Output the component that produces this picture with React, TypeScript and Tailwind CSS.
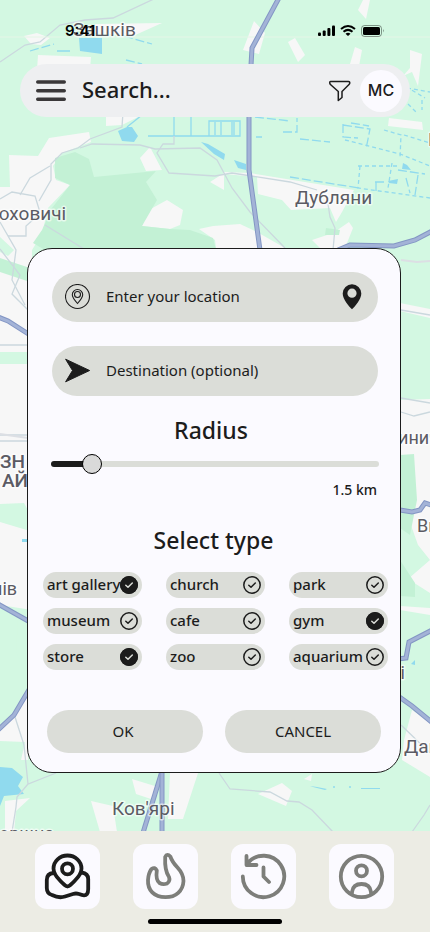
import React, { useState } from "react";

const placeTypes = [
  { name: "art gallery", selected: true },
  { name: "church", selected: false },
  { name: "park", selected: false },
  { name: "museum", selected: false },
  { name: "cafe", selected: false },
  { name: "gym", selected: true },
  { name: "store", selected: true },
  { name: "zoo", selected: false },
  { name: "aquarium", selected: false },
];

const highways = [
  "M280 -4 252 48 249 100V170L260 250",
  "M338 250 350 245 394 246 415 240 434 230",
  "M-2 317 8 321 30 335",
  "M-2 604 30 622",
  "M30 688 14 715 -2 730",
  "M400 510 412 512 420 510 425 503 434 506",
  "M398 659 406 658 409 642 434 629",
  "M398 696 412 706 434 724",
  "M163 768 142 836",
  "M162 768V836",
];

const labels = [
  { text: "Зашків", x: 73, y: 36 },
  { text: "Дубляни", x: 295, y: 204 },
  { text: "юховичі", x: -6, y: 220 },
  { text: "Ков'ярі", x: 112, y: 815 },
  { text: "Дави", x: 404, y: 753 },
];

const smallLabels = [
  { text: "инич", x: 398, y: 444 },
  { text: "Вин", x: 417, y: 532 },
  { text: "ні", x: 390, y: 679 },
  { text: "нів", x: -8, y: 595 },
  { text: "оршна", x: -1, y: 840 },
  { text: "К", x: 428, y: 146 },
];

function MapBackground() {
  return (
    <svg
      className="absolute inset-0 h-full w-full"
      viewBox="0 0 430 932"
      preserveAspectRatio="xMidYMin slice"
      aria-hidden="true"
    >
      <rect width="430" height="932" fill="#d3f8e2" />
      <g fill="#f7f7f7">
        <path d="M95 24 162 23 133 36 95 33ZM24 36 37 33 50 38 41 45 31 44ZM38 55 91 57 90 70H37Z" />
        <path d="M254 21 265 33 259 54 243 50ZM288 42 295 38 305 55 298 62ZM363 0H370L366 19 358 10ZM355 47 362 50 359 66 350 64ZM410 50 422 54 418 86 412 72 403 76 410 68Z" />
        <path d="M106 115H142L122 125 106 126ZM389 118 422 122 423 130 388 126Z" />
        <path d="M0 187 10 187 9 155 38 156 49 138 89 132 91 142 62 153 53 166 56 180 70 185 48 208 42 234 32 250V610L0 605Z" />
        <path d="M150 147 162 170 146 171 140 158ZM167 200 183 210 180 225 170 229 142 226 147 211ZM210 182 224 173V190Z" />
        <path d="M224 172 250 173 354 190 342 212 336 222 330 208 291 210 282 200 258 194 257 177 225 174ZM199 229 213 226 240 224 257 232 285 248H216L215 240ZM349 222 353 228 345 248H320L312 240 333 233Z" />
        <path d="M400 303 430 309V318L400 311ZM400 400 430 399V560L418 545 402 500ZM400 606 430 608V615L400 610ZM408 579 430 560V593ZM412 710 430 722V777L402 760 404 740Z" />
        <path d="M0 728 28 695V760H21L25 742 0 741ZM5 801 30 798 16 811 14 832H5ZM91 801 113 806 117 832H100ZM132 779 158 787 151 799 136 794ZM170 773H198L183 819H168ZM282 783 292 791 286 806 258 794ZM304 779 312 774 311 781Z" />
      </g>
      <g fill="#c3f1d5">
        <path d="M55 158 75 152 89 159 94 177 156 171 146 182 157 200 142 226 170 229 190 230 213 238 216 250H45L33 243 42 230 52 208 70 185 55 178Z" />
        <path d="M326 228 340 230 339 235 325 235ZM0 258 30 268V282L0 272ZM400 455 414 454 417 500 410 535 400 528ZM400 560 415 583V597L400 596Z" />
      </g>
      <path
        fill="#d3f8e2"
        d="M0 352H30V364H0ZM0 504 24 503 30 514V531L0 522ZM400 531 410 540 402 555ZM18 620 30 626V690L16 650ZM0 237 14 250 8 256 0 252Z"
      />
      <path
        fill="#90daee"
        d="M79 38 102 38 102 54 80 51ZM118 131 127 127 132 127 138 136 134 142 122 141ZM201 142 208 144 225 154 224 160 214 154ZM234 160 246 164 246 170 238 168ZM0 767 12 768 23 777 18 786 24 794 4 796 0 806ZM22 539H27V542H22ZM310 786 317 787 327 789 325 790 313 787ZM361 788H380V789H361ZM388 181 398 179 397 184 389 183ZM403 163 407 165 411 170 402 169ZM411 664 415 660V665Z"
      />
      <g fill="none" stroke="#90daee" strokeWidth="1.300">
        <path d="M127 127 142 115M148 136H240V121H209V136M174 115V136M191 115V136M215 122V135M221 122V135M232 122V135M234 122V135M57 51H70" />
        <path
          d="M30 51 54 44M124 36 152 44M126 60 142 64M256 137H262M283 132H297V118M255 117 290 121M300 139 330 142M343 124V137L358 138M343 125 370 129 366 149M351 123 369 126M290 177 359 188M375 182H386M376 191V180M398 170 425 174M406 178 410 193M418 175 415 195"
          strokeDasharray="9 3"
        />
        <path
          d="M345 140 400 154 430 166M358 166H400M360 166 358 188 430 198M384 130 401 135 400 158M404 135 430 143M392 163 388 188M408 104 416 112M400 83 425 98M407 88 430 92M422 100V110"
          strokeDasharray="4 3"
        />
        <path d="M333 787H335M349 787H351" />
      </g>
      <g fill="none" stroke="#cbd8de" strokeWidth="1.300">
        <path d="M0 62 25 45 40 42 60 25 85 20 113 18 156 -2" />
        <path d="M0 199 12 192 35 196 39 209 36 217 26 226 26 236H8M39 201 51 180 51 164 62 153 78 148 90 139 122 127 123 112M20 195 30 178 50 166M80 148 92 144 140 145 155 149 200 148 217 160 232 188 250 212 285 248" />
        <path d="M174 136V144H163L157 153 169 173 215 176 232 173 290 182 317 190M328 204 330 217 335 228 333 250M45 225 84 249M0 222 16 250 12 280 25 305" />
        <path d="M0 249 20 275 12 294 28 310M0 345H30M0 435H28M0 441H28M401 310 430 315M401 398 430 403M401 412 414 416 430 412" />
        <path d="M15 717 24 745 28 784 56 773M28 784 17 797 16 807 12 832M219 773 230 789 270 792 287 801 299 802 312 810 333 832M412 832 424 815 430 805M401 725 430 753" />
      </g>
      <path d="M0 434 28 438M401 260 417 262 430 261" fill="none" stroke="#dcdfe4" strokeWidth="2" />
      <path d="M0 37H430" stroke="#e5f6e7" strokeWidth="1" />
      {highways.map((d) => (
        <g key={d} fill="none">
          <path d={d} stroke="#8396c4" strokeWidth="5" />
          <path d={d} stroke="#a3b3d7" strokeWidth="3" />
        </g>
      ))}
      <g
        className="font-['Roboto','Noto_Sans',sans-serif]"
        fill="#5b5b64"
        stroke="#ffffff"
        strokeWidth="3"
        strokeOpacity="0.6"
        strokeLinejoin="round"
        paintOrder="stroke"
      >
        {labels.map((l) => (
          <text key={l.text} x={l.x} y={l.y} fontSize="19">
            {l.text}
          </text>
        ))}
        {smallLabels.map((l) => (
          <text key={l.text} x={l.x} y={l.y} fontSize="18">
            {l.text}
          </text>
        ))}
        <text x="25" y="468" fontSize="19" fontWeight="500" textAnchor="end">
          ЗН
        </text>
        <text x="28" y="487" fontSize="19" fontWeight="500" textAnchor="end">
          АЙ
        </text>
      </g>
    </svg>
  );
}

function StatusBar() {
  return (
    <header className="flex h-16 items-start justify-between pt-5 pr-[45px] pl-[65px]">
      <span className="font-['Inter',sans-serif] text-[15px] leading-[22px] font-semibold text-black">
        9:41
      </span>
      <svg className="mt-1 h-[14px] w-[67px]" viewBox="0 0 67 14" aria-hidden="true">
        <rect x="0" y="8.500" width="3" height="3.500" rx="1" />
        <rect x="4.700" y="6.500" width="3" height="5.500" rx="1" />
        <rect x="9.400" y="4" width="3" height="8" rx="1" />
        <rect x="14" y="1.500" width="3" height="10.500" rx="1" />
        <g fill="none" stroke="#000" strokeWidth="2">
          <path d="M23 5Q30 -1 37 5" />
          <path d="M25.500 7.800Q30 4 34.500 7.800" />
        </g>
        <path d="M27.500 9.800Q30 7.800 32.500 9.800L30 12Z" />
        <rect x="43.500" y="1.500" width="20" height="11" rx="3" fill="none" stroke="#000" strokeOpacity="0.4" />
        <rect x="45" y="3" width="17" height="8" rx="1.500" />
        <path d="M65 5Q66.500 6.500 65 8.500Z" fillOpacity="0.5" />
      </svg>
    </header>
  );
}

function SearchBar() {
  return (
    <div className="mx-5 flex h-[53px] items-center rounded-full bg-[#eeeff1] pr-2 pl-4">
      <button type="button" aria-label="Open menu" className="shrink-0">
        <svg className="h-6 w-[30px]" viewBox="0 0 30 24" fill="none" stroke="#3a3839" strokeWidth="3.400" strokeLinecap="round">
          <path d="M1.700 3H28.300M1.700 11.700H28.300M1.700 20.300H28.300" />
        </svg>
      </button>
      <input
        type="search"
        aria-label="Search"
        placeholder="Search..."
        className="ml-4 min-w-0 flex-1 bg-transparent pb-1 text-[22px] leading-8 font-medium text-[#1c1c1c] outline-none placeholder:text-[#1c1c1c]"
      />
      <button type="button" aria-label="Filter" className="mr-[9px] shrink-0">
        <svg className="h-[22px] w-[23px]" viewBox="0 0 23 22" fill="none" stroke="#1c1c1c" strokeWidth="1.500" strokeLinejoin="round">
          <path d="M2.500 1.500H20.500Q21.800 1.500 21.800 2.700 21.800 3.700 21 4.500L14 11.500V17.500L10.300 20.500V11.500L2.700 4.700Q1.700 3.900 1.700 2.700 1.700 1.500 2.500 1.500Z" />
        </svg>
      </button>
      <button
        type="button"
        aria-label="Profile MC"
        className="size-[42px] shrink-0 rounded-full bg-[#fbfaff] pb-0.5 font-['Inter',sans-serif] text-base font-medium text-[#1c1c1c]"
      >
        MC
      </button>
    </div>
  );
}

function LocationIcon() {
  return (
    <svg className="size-[26px] shrink-0" viewBox="0 0 26 26" fill="none" stroke="#1c1c1c" strokeWidth="1.100" aria-hidden="true">
      <circle cx="12.500" cy="12.500" r="12" />
      <path d="M12.500 19.500Q7.300 13.500 7.300 10.700A5.200 5.200 0 0 1 17.700 10.700Q17.700 13.500 12.500 19.500Z" />
      <circle cx="12.500" cy="10.500" r="3" />
    </svg>
  );
}

function ArrowIcon() {
  return (
    <svg className="size-[26px] shrink-0" viewBox="0 0 26 26" fill="#1c1c1c" stroke="#1c1c1c" strokeLinejoin="round" aria-hidden="true">
      <path d="M.600 1.200 24.600 12.500 .600 23.800 7.500 12.500Z" />
    </svg>
  );
}

function PinIcon() {
  return (
    <svg className="h-[26px] w-5" viewBox="0 0 20 26" fill="#1c1c1c" aria-hidden="true">
      <path
        fillRule="evenodd"
        d="M10 .300A9.300 9.300 0 0 1 19.300 9.500C19.300 15 13 22.500 10 25.300 7 22.500 .700 15 .700 9.500A9.300 9.300 0 0 1 10 .300ZM10 4.600A4.600 4.600 0 1 0 10 13.800 4.600 4.600 0 0 0 10 4.600Z"
      />
    </svg>
  );
}

function TypeOption({ name, selected }: { name: string; selected: boolean }) {
  return (
    <label className="flex h-[26px] items-center justify-between rounded-full bg-[#dbddd8] pr-1 pl-1 text-[15px] leading-5 font-medium whitespace-nowrap text-[#1c1c1c]">
      <span className="pb-0.5">{name}</span>
      <span className="grid shrink-0 place-items-center">
        <input
          type="checkbox"
          defaultChecked={selected}
          className="peer col-start-1 row-start-1 size-[18px] appearance-none rounded-full checked:bg-[#1c1c1c]"
        />
        <svg
          className="pointer-events-none col-start-1 row-start-1 size-[18px] text-[#1c1c1c] peer-checked:text-[#dbddd8]"
          viewBox="0 0 18 18"
          fill="none"
          strokeWidth="1.500"
          strokeLinecap="round"
          strokeLinejoin="round"
          aria-hidden="true"
        >
          <circle cx="9" cy="9" r="8.200" stroke="#1c1c1c" />
          <path d="M5.800 9.200 8 11.200 12.300 7" stroke="currentColor" />
        </svg>
      </span>
    </label>
  );
}

function FilterCard() {
  const [radius, setRadius] = useState(1.5);
  const fill = { "--fill": `${10 + (radius / 15) * 90}%` } as React.CSSProperties;
  return (
    <form
      className="mt-[131px] mr-[29px] mb-[58px] ml-[27px] rounded-[25px] border border-[#1c1c1c] bg-[#fbfaff] pt-[23px] pb-[19px] text-[#1c1c1c]"
      onSubmit={(e) => e.preventDefault()}
    >
      <div className="flex flex-col gap-6 pr-[22px] pl-6">
        <div className="flex h-[50px] items-center gap-[15px] rounded-full bg-[#dbddd8] pr-4 pl-[13px]">
          <LocationIcon />
          <input
            type="text"
            aria-label="Your location"
            placeholder="Enter your location"
            className="min-w-0 flex-1 bg-transparent pb-0.5 text-[15px] leading-6 outline-none placeholder:text-[#1c1c1c]"
          />
          <button type="button" aria-label="Pick on map">
            <PinIcon />
          </button>
        </div>
        <div className="flex h-[50px] items-center gap-[15px] rounded-full bg-[#dbddd8] pr-4 pl-[13px]">
          <ArrowIcon />
          <input
            type="text"
            aria-label="Destination"
            placeholder="Destination (optional)"
            className="min-w-0 flex-1 bg-transparent pb-0.5 text-[15px] leading-6 outline-none placeholder:text-[#1c1c1c]"
          />
        </div>
      </div>

      <div className="mt-[18px] pr-[21px] pl-[23px]">
        <label htmlFor="radius" className="block pr-2 text-center text-[23px] leading-8 font-medium">
          Radius
        </label>
        <input
          id="radius"
          type="range"
          min={0}
          max={15}
          step={0.5}
          value={radius}
          onChange={(e) => setRadius(Number(e.target.value))}
          style={fill}
          className="mt-2 block h-5 w-full appearance-none bg-transparent [&::-webkit-slider-runnable-track]:h-1.5 [&::-webkit-slider-runnable-track]:rounded-full [&::-webkit-slider-runnable-track]:bg-[linear-gradient(to_right,#1c1c1c_calc(var(--fill)-5%),#dbddd8_calc(var(--fill)-5%))] [&::-webkit-slider-thumb]:-mt-[7px] [&::-webkit-slider-thumb]:size-5 [&::-webkit-slider-thumb]:appearance-none [&::-webkit-slider-thumb]:rounded-full [&::-webkit-slider-thumb]:border [&::-webkit-slider-thumb]:border-black [&::-webkit-slider-thumb]:bg-[#d9d9d9]"
        />
        <output htmlFor="radius" className="mt-1 block pr-0.5 pb-px text-right text-[14px] leading-6 font-medium">
          {radius} km
        </output>
      </div>

      <fieldset className="mt-[21px] pr-3 pl-[15px]">
        <legend className="w-full pr-1 text-center text-[23px] leading-8 font-medium">Select type</legend>
        <div className="mt-4 grid grid-cols-3 gap-x-6 gap-y-2.5">
          {placeTypes.map((t) => (
            <TypeOption key={t.name} {...t} />
          ))}
        </div>
      </fieldset>

      <div className="mt-10 grid grid-cols-2 gap-[22px] px-[19px]">
        <button type="submit" className="h-[43px] rounded-full bg-[#dbddd8] pr-1 pb-0.5 text-[15px] leading-6">
          OK
        </button>
        <button type="button" className="h-[43px] rounded-full bg-[#dbddd8] pb-0.5 text-[15px] leading-6">
          CANCEL
        </button>
      </div>
    </form>
  );
}

function NavButton({ label, active, children }: { label: string; active?: boolean; children: React.ReactNode }) {
  return (
    <button
      type="button"
      aria-label={label}
      className={`grid size-[65px] place-items-center rounded-xl bg-[#fbfaff] ${active ? "text-[#1c1c1c]" : "text-[#7d7e7a]"}`}
    >
      <svg className="size-[49px]" viewBox="0 0 49 49" fill="none" stroke="currentColor" strokeWidth="3.800" strokeLinecap="round" strokeLinejoin="round">
        {children}
      </svg>
    </button>
  );
}

function BottomNav() {
  return (
    <nav className="mt-auto bg-[#ecece4] pt-[13px] pb-2">
      <div className="flex justify-center gap-[33px] pr-0.5">
        <NavButton label="Map" active>
          <path d="M24.500 34.500Q27 34 32 28.500 38.500 22 38.500 16.500A14 13 0 0 0 10.500 16.500Q10.500 22 17 28.500 22 34 24.500 34.500Z" />
          <circle cx="24.500" cy="16.800" r="5.500" />
          <path d="M10.500 21Q3.800 21.500 3.800 28V36Q3.800 41.500 9 43 16 46.500 22 44.500L30 42Q33 41 36 42 42 44.500 44 42 45.200 40.500 45.200 37V27Q45.200 21.500 38.500 20.500" />
        </NavButton>
        <NavButton label="Popular">
          <path d="M24.200 5Q26 1 29.500 4.800 31 9.500 36.500 15.500 42.500 22 42.500 29C42 39 35 45.200 24.500 45.200 13 45.200 6.500 38 7 28Q7.500 21 10.500 17Q14 14.500 15.800 18.500 14.500 28 18.500 31 22 33 26 31.500 29.500 29 28 25 23.500 18.500 24.200 5Z" />
        </NavButton>
        <NavButton label="History">
          <path d="M3.800 24.500A20.700 20.700 0 1 0 8.500 11.300M7.500 4V13H17.500M24.500 15.500V24.500L30 30" />
        </NavButton>
        <NavButton label="Account">
          <circle cx="24.500" cy="24.500" r="20.700" />
          <circle cx="24.500" cy="18.800" r="5.500" />
          <path d="M15 41V40Q16 32 24.500 32T34 40V41" />
        </NavButton>
      </div>
      <div className="mx-auto mt-[10px] h-[5px] w-[134px] rounded-full bg-black" />
    </nav>
  );
}

export default function App() {
  return (
    <div className="relative min-h-screen overflow-hidden font-['Noto_Sans',sans-serif]">
      <MapBackground />
      <main className="relative flex min-h-screen flex-col">
        <StatusBar />
        <SearchBar />
        <FilterCard />
        <BottomNav />
      </main>
    </div>
  );
}
